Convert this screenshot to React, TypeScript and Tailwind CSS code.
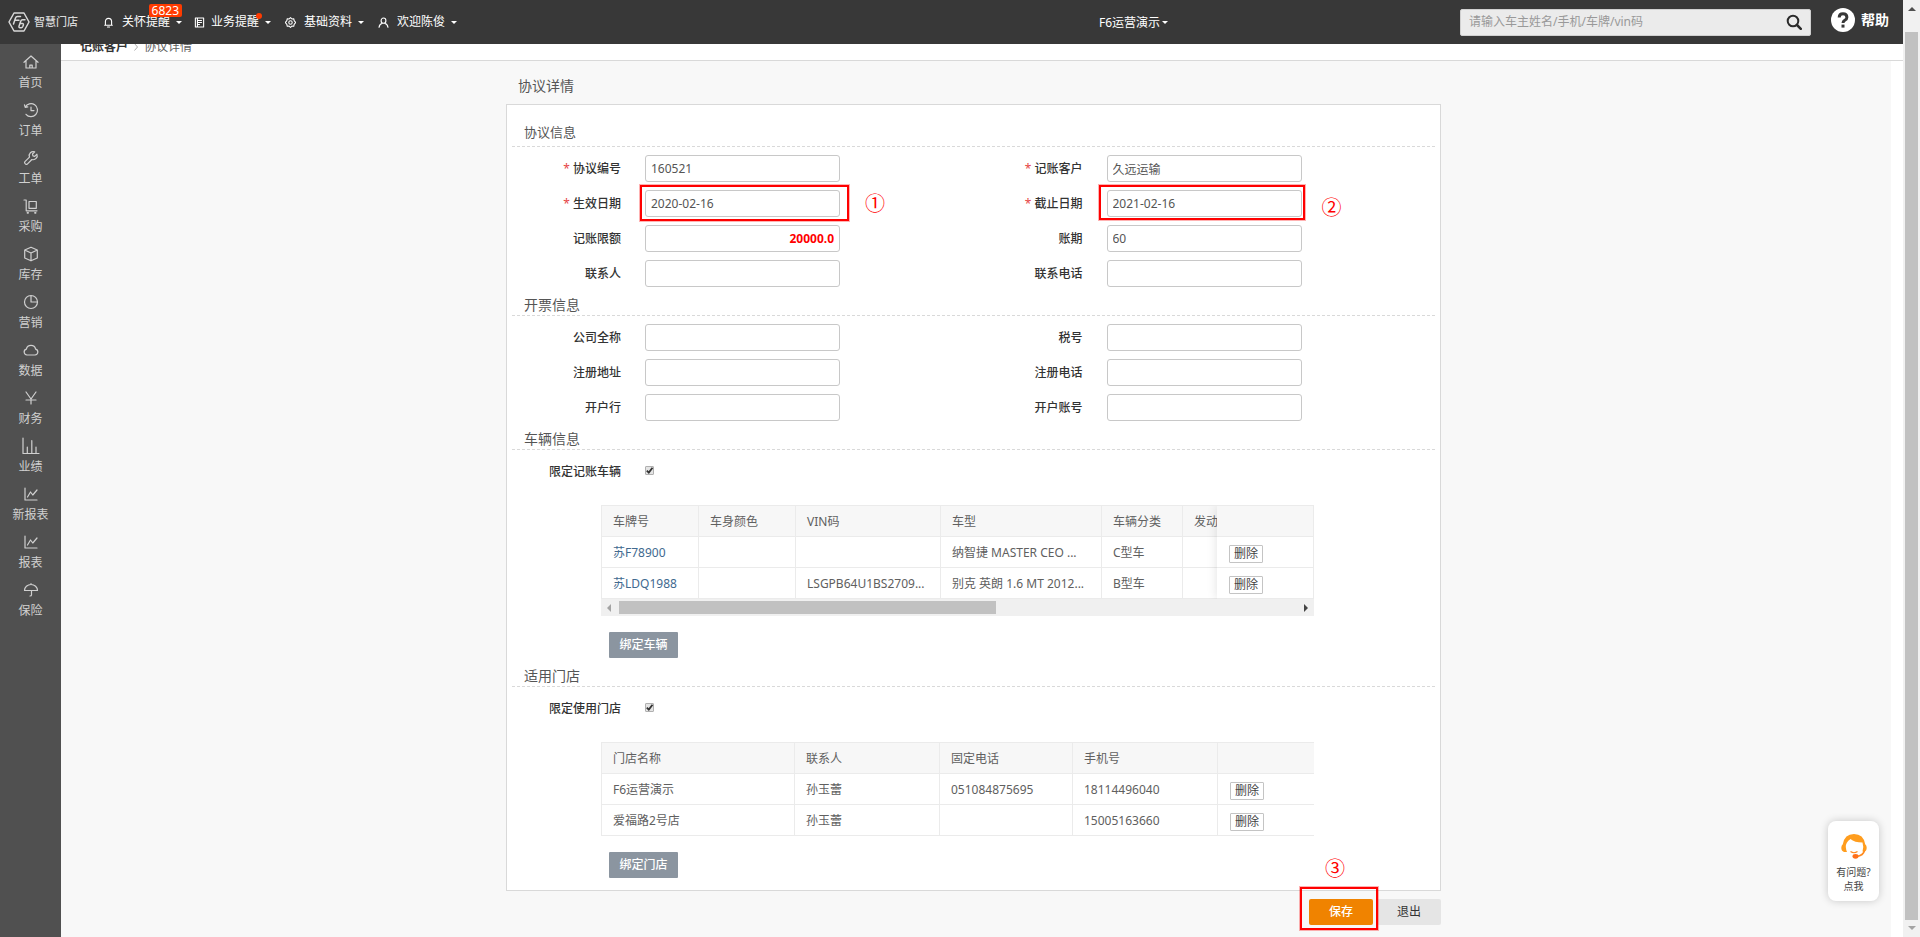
import { ReactNode } from 'react';
import clsx from 'clsx';

const stroke = {
  fill: 'none',
  stroke: 'currentColor',
  strokeWidth: 1.2,
  strokeLinecap: 'round' as const,
  strokeLinejoin: 'round' as const,
};

const menu: { label: string; icon: ReactNode }[] = [
  { label: '首页', icon: <path d="M1 8.3 8 2l7 6.3M3 7v7h10V7M6.8 14v-2.8h2.4V14" /> },
  { label: '订单', icon: <path d="M2.2 5.2A6.5 6.5 0 1 1 3 12.3M1.5 2.8l.7 2.6 2.6-.6M8 5v3.6h3" /> },
  {
    label: '工单',
    icon: (
      <path d="M13.9 4.2 11.8 6.3 9.9 5.9 9.5 4l2.2-2.1a4 4 0 0 0-5.2 5.2L1.9 11.7a1.3 1.3 0 0 0 0 1.7l.7.7a1.3 1.3 0 0 0 1.7 0l4.6-4.6a4 4 0 0 0 5-5.3z" />
    ),
  },
  {
    label: '采购',
    icon: (
      <>
        <path d="M1 2h2.2v10.8H14M6 3.5h7.3v6.8H6z" />
        <path d="M4.5 14.8h.6M12 14.8h.6" strokeWidth="1.8" />
      </>
    ),
  },
  { label: '库存', icon: <path d="M8 1.2 14.3 4v8L8 14.8 1.7 12V4zM1.7 4 8 7l6.3-3M8 7v7.8" /> },
  { label: '营销', icon: <path d="M8 1.5a6.5 6.5 0 1 0 6.5 6.5M8 1.5V8h6.5A6.5 6.5 0 0 0 8 1.5" /> },
  {
    label: '数据',
    icon: <path d="M4 13a3 3 0 0 1-.6-5.9 4.7 4.7 0 0 1 9.2 0A3 3 0 0 1 12 13z" />,
  },
  { label: '财务', icon: <path d="M3 2l5 7 5-7M8 9v5M3 10h10" /> },
  { label: '业绩', icon: <path d="M0 0v15.5h16M4.3 15V9M8.8 15V2.5M13 15V9" /> },
  { label: '新报表', icon: <path d="M2 2v12h12M4.5 11l3-5 2.3 3L14 4" /> },
  { label: '报表', icon: <path d="M2 2v12h12M4.5 11l3-5 2.3 3L14 4" /> },
  { label: '保险', icon: <path d="M1.5 8.5a6.5 6 0 0 1 13 0zM8 2.4V1.5M8.5 8.5V13q0 1-1.5 1" /> },
];

const navItems: { label: string; icon: ReactNode; badge?: string; dot?: boolean }[] = [
  { label: '关怀提醒', badge: '6823', icon: <path d="M8 2c-3 0-4.5 2-4.5 4.7V12h9V6.7C12.5 4 11 2 8 2zM2.5 12h11M6.5 14.5h3" /> },
  { label: '业务提醒', dot: true, icon: <path d="M2 1.5h12v13H2zM5 5h6M5 8h6M5 11h3M5 1.5v13" /> },
  {
    label: '基础资料',
    icon: (
      <>
        <path d="M8 1l2 1.8 2.7-.3.6 2.7L15.500 8l-2.200 2.800-.6 2.700-2.700-.3L8 15l-2-1.800-2.700.3-.6-2.700L.5 8l2.200-2.800.6-2.700 2.700.3z" />
        <circle cx="8" cy="8" r="2.5" />
      </>
    ),
  },
  { label: '欢迎陈俊', icon: <path d="M8 1.5a3.5 3.8 0 0 1 0 7.6 3.5 3.8 0 0 1 0-7.6M1.500 15c.5-4 2.500-5.500 5-6M14.500 15c-.5-4-2.500-5.500-5-6" /> },
];

const vehicles = [
  { plate: '苏F78900', color: '', vin: '', model: '纳智捷 MASTER CEO ...', type: 'C型车' },
  { plate: '苏LDQ1988', color: '', vin: 'LSGPB64U1BS2709...', model: '别克 英朗 1.6 MT 2012...', type: 'B型车' },
];

const stores = [
  { name: 'F6运营演示', contact: '孙玉蕾', tel: '051084875695', mobile: '18114496040' },
  { name: '爱福路2号店', contact: '孙玉蕾', tel: '', mobile: '15005163660' },
];

const cell = 'h-[31px] border-b border-r border-[#ebebeb] pl-[11px] pt-0.5 text-left font-normal whitespace-nowrap';
const actionCell = 'h-[31px] border-b border-[#ebebeb] pl-3 text-left font-normal';

function Caret() {
  return (
    <svg viewBox="0 0 6 3" className="h-[3px] w-[6px] shrink-0" fill="currentColor">
      <path d="M0 0h6L3 3z" />
    </svg>
  );
}

function Header() {
  return (
    <header className="relative z-10 flex h-11 shrink-0 items-center bg-[#383838] pr-3.5 pl-2 text-white">
      <a href="#" className="flex items-center gap-1 text-[11px] font-medium text-[#d8d8d8]">
        <svg viewBox="0 0 22 20" className="h-5 w-[22px]" {...stroke} strokeWidth={1.5}>
          <path d="M6 1h10l5 9-5 9H6l-5-9z" />
          <path d="M12.5 4.5h-3Q8 4.5 7.5 6L5.5 12M7 8.3h4M17 7.8h-2.5q-1.3 0-1.8 1.5L11 14.2q-.3 1.5 1 1.5h1.3q1 0 1.5-1.2l.6-1.6q.3-1.3-1-1.3h-2.3" />
        </svg>
        智慧门店
      </a>
      <nav className="ml-[25px] flex items-center gap-3.5">
        {navItems.map((item) => (
          <button key={item.label} className={clsx('relative flex items-center gap-1.5', item.badge && '-mr-0.5')}>
            <svg
              viewBox="0 0 16 16"
              className={clsx('h-[11px] w-[11px]', !item.dot && 'mr-0.5')}
              {...stroke}
              strokeWidth={1.6}
            >
              {item.icon}
            </svg>
            <span>{item.label}</span>
            <Caret />
            {item.badge && (
              <span className="absolute -top-[10px] right-0 rounded-xs bg-[#ff3b00] px-[3px] text-[12px] leading-[13px]">
                {item.badge}
              </span>
            )}
            {item.dot && <span className="absolute -top-px right-[9px] h-1.5 w-1.5 rounded-full bg-[#ff3b00]" />}
          </button>
        ))}
      </nav>
      <button className="mr-[292px] ml-auto flex items-center gap-0.5 pt-px">
        F6运营演示
        <Caret />
      </button>
      <form className="relative flex h-[27px] w-[351px] items-center rounded-xs border border-[#d0d0d0] bg-[#ebebeb]">
        <input
          aria-label="搜索"
          placeholder="请输入车主姓名/手机/车牌/vin码"
          className="min-w-0 flex-1 bg-transparent pl-2 text-gray-700 outline-none placeholder:text-[#999]"
        />
        <button type="button" aria-label="查询" className="mr-2 text-[#2b2b2b]">
          <svg viewBox="0 0 16 16" className="h-4 w-4" {...stroke} strokeWidth={2}>
            <circle cx="7" cy="7" r="5.3" />
            <path d="M11 11l3.8 3.8" strokeWidth="2.5" />
          </svg>
        </button>
      </form>
      <a href="#" className="mb-1 ml-5 flex items-center gap-1.5 text-[14px] font-bold">
        <svg viewBox="0 0 24 24" className="h-6 w-6">
          <circle cx="12" cy="12" r="12" fill="#fff" />
          <path d="M8.2 9.5Q8.2 5.8 12 5.8T15.9 9.2Q15.9 11 13.8 12.2 12 13.3 12 15" fill="none" stroke="#383838" strokeWidth="3" />
          <path d="M10.5 16.6h3v3h-3z" fill="#383838" />
        </svg>
        帮助
      </a>
    </header>
  );
}

function Sidebar() {
  return (
    <aside className="w-[61px] shrink-0 bg-[#505050] pt-[5px]">
      {menu.map((item) => (
        <a
          key={item.label}
          href="#"
          className="flex h-12 flex-col items-center justify-center gap-1 leading-[18px] text-[#d0d0d0]"
        >
          <svg viewBox="0 0 16 16" className="h-4 w-4 overflow-visible" {...stroke}>
            {item.icon}
          </svg>
          {item.label}
        </a>
      ))}
    </aside>
  );
}

function SectionTitle({ first, children }: { first?: boolean; children: ReactNode }) {
  return (
    <h2
      className={clsx(
        'border-b border-dashed border-[#d9d9d9] pl-3 text-[#555]',
        first ? 'h-[27px] text-[13px] leading-6' : 'h-[21px] text-[14px] leading-5'
      )}
    >
      {children}
    </h2>
  );
}

interface FieldProps {
  id: string;
  label: string;
  value?: string;
  required?: boolean;
  amount?: boolean;
  children?: ReactNode;
}

function Field({ id, label, value = '', required, amount, children }: FieldProps) {
  return (
    <div className="flex h-[27px] items-center">
      <label htmlFor={id} className="w-[133px] shrink-0 pr-6 text-right font-medium text-[#333]">
        {required && <span className="mr-[3px] font-normal text-[#e64545]">*</span>}
        {label}
      </label>
      <div className="relative">
        <input
          id={id}
          type="text"
          defaultValue={value}
          className={clsx(
            'h-[27px] w-[195px] rounded-[3px] border border-[#c8c8c8] bg-white px-[5px] outline-none',
            amount ? 'text-right font-bold text-[#f00]' : 'text-[#555]'
          )}
        />
        {children}
      </div>
    </div>
  );
}

function CheckField({ id, label }: { id: string; label: string }) {
  return (
    <div className="mt-2 mb-5 flex h-[27px] items-center">
      <label htmlFor={id} className="w-[133px] shrink-0 pr-6 text-right font-medium text-[#333]">
        {label}
      </label>
      <span className="relative mb-0.5 flex">
        <input
          id={id}
          type="checkbox"
          defaultChecked
          className="h-[9px] w-[9px] appearance-none rounded-[1px] border border-[#b0b0b0] bg-[#e4e4e4]"
        />
        <svg viewBox="0 0 9 9" className="pointer-events-none absolute h-[9px] w-[9px]" fill="none" stroke="#333" strokeWidth="1.8">
          <path d="M1.8 4.6l2 2L7.5 1.8" />
        </svg>
      </span>
    </div>
  );
}

function DeleteButton() {
  return (
    <button className="mt-1 block h-[18px] rounded-[1px] border border-[#c4c4c4] bg-white px-1 leading-4 text-[#444]">
      删除
    </button>
  );
}

function BindButton({ children }: { children: ReactNode }) {
  return (
    <button className="mt-4 ml-[97px] block h-[26px] w-[69px] rounded-[1px] bg-[#8b95a0] font-medium text-white">
      {children}
    </button>
  );
}

function VehicleTable() {
  return (
    <div className="ml-[89px] max-w-[713px]">
      <div className="flex overflow-hidden border-t border-l border-[#ebebeb]">
        <div className="min-w-0 flex-1 overflow-hidden">
          <table className="w-[678px] table-fixed border-separate border-spacing-0">
            <thead>
              <tr className="bg-[#f7f7f7]">
                <th className={clsx(cell, 'w-[97px]')}>车牌号</th>
                <th className={clsx(cell, 'w-[97px]')}>车身颜色</th>
                <th className={clsx(cell, 'w-[145px]')}>VIN码</th>
                <th className={clsx(cell, 'w-[161px]')}>车型</th>
                <th className={clsx(cell, 'w-[81px]')}>车辆分类</th>
                <th className={cell}>发动</th>
              </tr>
            </thead>
            <tbody>
              {vehicles.map((v) => (
                <tr key={v.plate}>
                  <td className={cell}>
                    <a href="#" className="text-[#41698f]">
                      {v.plate}
                    </a>
                  </td>
                  <td className={cell}>{v.color}</td>
                  <td className={cell}>{v.vin}</td>
                  <td className={cell}>{v.model}</td>
                  <td className={cell}>{v.type}</td>
                  <td className={cell} />
                </tr>
              ))}
            </tbody>
          </table>
        </div>
        {/* fixed action column */}
        <table className="relative w-[97px] border-separate border-spacing-0 bg-white shadow-[0_0_10px_rgba(0,0,0,0.12)]">
          <thead>
            <tr className="bg-[#f7f7f7]">
              <th className={clsx(actionCell, 'border-r')} />
            </tr>
          </thead>
          <tbody>
            {vehicles.map((v) => (
              <tr key={v.plate}>
                <td className={clsx(actionCell, 'border-r')}>
                  <DeleteButton />
                </td>
              </tr>
            ))}
          </tbody>
        </table>
      </div>
      <div className="flex h-[17px] items-center bg-[#f0f0f0] px-[6px]">
        <svg viewBox="0 0 4 8" className="h-2 w-1" fill="#a3a3a3">
          <path d="M4 0v8L0 4z" />
        </svg>
        <div className="ml-2 h-[13px] w-[377px] bg-[#c1c1c1]" />
        <svg viewBox="0 0 4 8" className="ml-auto h-2 w-1" fill="#444">
          <path d="M0 0v8l4-4z" />
        </svg>
      </div>
    </div>
  );
}

function StoreTable() {
  return (
    <div className="ml-[89px] max-w-[713px]">
      <table className="w-full table-fixed border-separate border-spacing-0 border-t border-l border-[#ebebeb]">
        <thead>
          <tr className="bg-[#f7f7f7]">
            <th className={clsx(cell, 'w-[193px]')}>门店名称</th>
            <th className={clsx(cell, 'w-[145px]')}>联系人</th>
            <th className={clsx(cell, 'w-[133px]')}>固定电话</th>
            <th className={clsx(cell, 'w-[145px]')}>手机号</th>
            <th className={actionCell} />
          </tr>
        </thead>
        <tbody>
          {stores.map((s) => (
            <tr key={s.name}>
              <td className={cell}>{s.name}</td>
              <td className={cell}>{s.contact}</td>
              <td className={cell}>{s.tel}</td>
              <td className={cell}>{s.mobile}</td>
              <td className={actionCell}>
                <DeleteButton />
              </td>
            </tr>
          ))}
        </tbody>
      </table>
    </div>
  );
}

const markBox = 'pointer-events-none absolute border-2 border-[#f00] ring-1 ring-[#f00]/30';
const markNumber = 'pointer-events-none absolute text-[20px] leading-5 text-[#f00]';

function Agreement() {
  return (
    <section className="mx-auto w-full max-w-[935px]">
      <h1 className="h-[43px] pt-2 pl-3 text-[14px] leading-[34px] text-[#555]">协议详情</h1>
      <div className="border border-[#d9d9d9] bg-white px-[5px] pt-[15px] pb-3">
        <SectionTitle first>协议信息</SectionTitle>
        <div className="grid grid-cols-2 gap-y-2 py-2">
          <Field id="code" label="协议编号" value="160521" required />
          <Field id="customer" label="记账客户" value="久远运输" required />
          <Field id="start" label="生效日期" value="2020-02-16" required>
            <span className={clsx(markBox, '-top-[5px] -left-[5px] h-9 w-[209px]')} />
            <span className={clsx(markNumber, 'top-1 left-[220px]')}>①</span>
          </Field>
          <Field id="end" label="截止日期" value="2021-02-16" required>
            <span className={clsx(markBox, '-top-[5px] -left-2 h-[35px] w-[206px]')} />
            <span className={clsx(markNumber, 'top-2 left-[215px]')}>②</span>
          </Field>
          <Field id="limit" label="记账限额" value="20000.0" amount />
          <Field id="period" label="账期" value="60" />
          <Field id="contact" label="联系人" />
          <Field id="phone" label="联系电话" />
        </div>

        <SectionTitle>开票信息</SectionTitle>
        <div className="grid grid-cols-2 gap-y-2 py-2">
          <Field id="company" label="公司全称" />
          <Field id="tax" label="税号" />
          <Field id="address" label="注册地址" />
          <Field id="regphone" label="注册电话" />
          <Field id="bank" label="开户行" />
          <Field id="account" label="开户账号" />
        </div>

        <SectionTitle>车辆信息</SectionTitle>
        <CheckField id="limitCar" label="限定记账车辆" />
        <VehicleTable />
        <BindButton>绑定车辆</BindButton>

        <div className="mt-2">
          <SectionTitle>适用门店</SectionTitle>
        </div>
        <CheckField id="limitStore" label="限定使用门店" />
        <StoreTable />
        <BindButton>绑定门店</BindButton>
      </div>
      <div className="mt-2 flex justify-end gap-1">
        <div className="relative">
          <button className="h-[26px] w-16 rounded-xs bg-[#f08300] font-medium text-white">保存</button>
          <span className={clsx(markBox, '-top-3 -left-[9px] z-10 h-[43px] w-[78px]')} />
          <span className={clsx(markNumber, '-top-10 left-4')}>③</span>
        </div>
        <button className="h-[26px] w-16 rounded-xs bg-[#e5e5e5] text-[#333]">退出</button>
      </div>
    </section>
  );
}

function Support() {
  return (
    <button className="absolute right-6 bottom-9 flex h-20 w-[51px] flex-col items-center rounded-lg bg-white pt-3 text-[10px] leading-[14px] text-[#444] shadow-[0_0_8px_rgba(0,0,0,0.2)]">
      <svg viewBox="0 0 26 26" className="mb-1.5 h-[26px] w-[26px]">
        <path
          d="M3 19Q.3 18 .3 14.8.3 12.3 1.8 11.3 3.5 1 13 1t11.2 10.3q1.5 1 1.5 3.5 0 3.2-2.7 4.2l-1.5-.5Q23 14 21.5 9.5 13.5 9.5 9.5 6 4.5 9.5 4.8 14 5 16.5 6 19z"
          fill="#ff9d1e"
        />
        <path d="M23.5 17.5q-1 5-8 6" fill="none" stroke="#ff8a1e" strokeWidth="1.5" />
        <path d="M9.5 18.5Q13 21 16.5 18.5" fill="none" stroke="#ff8a1e" strokeWidth="1.2" />
        <ellipse cx="14.5" cy="23.3" rx="3" ry="2.4" fill="#ff6f1a" />
      </svg>
      <span>有问题?</span>
      <span>点我</span>
    </button>
  );
}

export default function App() {
  return (
    <div className="flex h-screen overflow-hidden bg-white font-['Noto_Sans','Noto_Sans_CJK_SC',sans-serif] text-[12px] leading-4 text-[#606060]">
      <div className="relative flex min-w-0 flex-1 flex-col">
        <Header />
        <div className="flex min-h-0 flex-1">
          <Sidebar />
          <main className="flex min-w-0 flex-1 flex-col">
            <div className="-mt-[11px] flex h-7 shrink-0 items-center gap-1.5 border-b border-[#d9d9d9] pl-[19px]">
              <a href="#" className="font-bold text-[#333]">
                记账客户
              </a>
              <svg viewBox="0 0 4 8" className="h-2 w-1" fill="none" stroke="#aaa">
                <path d="M.5.5 3.5 4 .5 7.5" />
              </svg>
              <span>协议详情</span>
            </div>
            <div className="mr-3 flex-1 bg-[#f8f8f8] pr-[5px]">
              <Agreement />
            </div>
          </main>
        </div>
        <Support />
      </div>
      {/* page scrollbar */}
      <div className="flex w-[17px] shrink-0 flex-col items-center bg-[#f1f1f1] py-[7px]">
        <svg viewBox="0 0 8 4" className="h-1 w-2" fill="#505050">
          <path d="M0 4h8L4 0z" />
        </svg>
        <div className="mt-[21px] mb-1.5 w-[13px] flex-1 bg-[#c1c1c1]" />
        <svg viewBox="0 0 8 4" className="h-1 w-2" fill="#a3a3a3">
          <path d="M0 0h8L4 4z" />
        </svg>
      </div>
    </div>
  );
}
